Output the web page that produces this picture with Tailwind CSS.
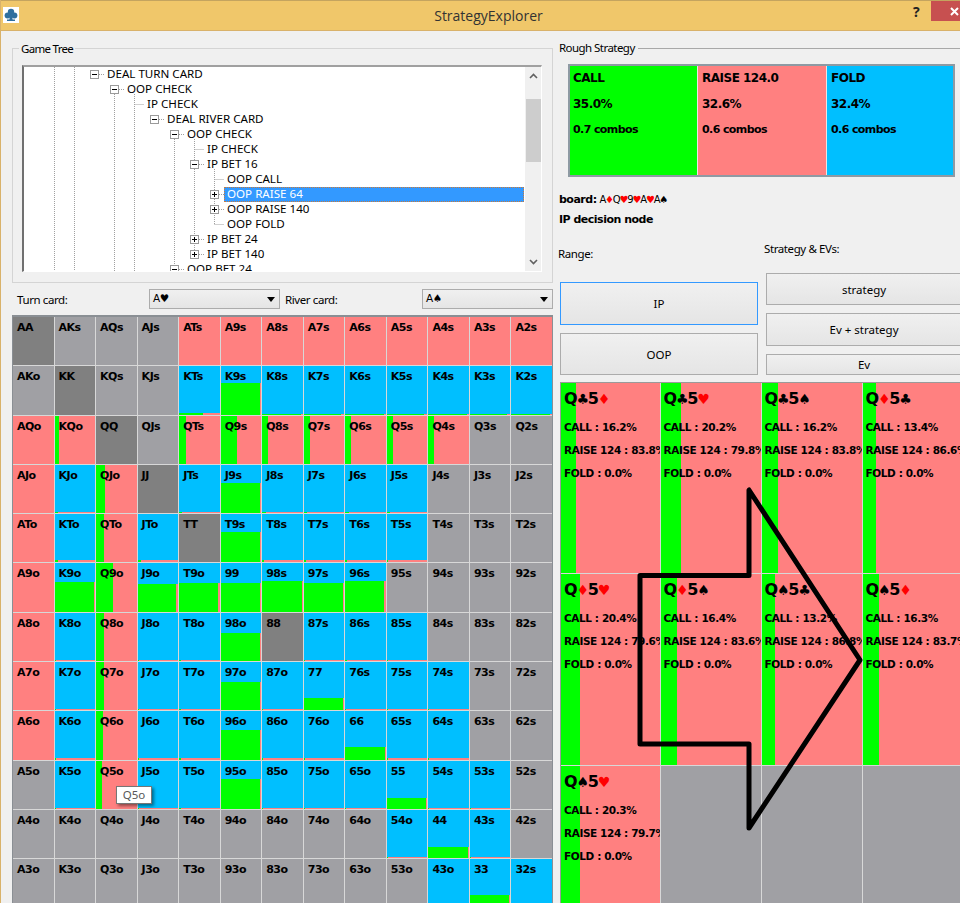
<!DOCTYPE html>
<html>
<head>
<meta charset="utf-8">
<script src="https://cdn.jsdelivr.net/npm/@tailwindcss/browser@4"></script>
</head>
<body class="bg-[#f0f0f0]">
<div class="relative w-[960px] h-[903px] overflow-hidden bg-[#f0f0f0] text-black text-[12px] font-['Noto_Sans',sans-serif] border-l border-l-[#d9b26a]">
  <!-- Title bar -->
  <div class="relative h-[31px] -ml-px flex items-start bg-[#f0c76a] border-t border-t-[#c4a45f] border-b border-b-[#d9b26a]">
    <div class="ml-[3px] mt-[6px] w-[16px] h-[16px] bg-white flex items-center justify-center">
      <svg width="14" height="14" viewBox="0 0 14 14"><g fill="#2f6f9f"><circle cx="7" cy="4" r="3.2"/><circle cx="3.6" cy="7.6" r="3"/><circle cx="10.4" cy="7.6" r="3"/><path d="M6 7h2l.6 4.6H11V13H3v-1.4h2.4z"/></g></svg>
    </div>
    <div class="absolute left-[433px] top-[6px] w-[111px] text-center text-[14px] leading-[18px] text-[#333] font-['Open_Sans',sans-serif]">StrategyExplorer</div>
    <div class="absolute left-[913px] top-[2px] text-[14px] leading-[18px] font-bold text-[#222]">?</div>
    <div class="absolute left-[931px] top-0 w-[30px] h-[20px] bg-[#c75050] flex items-center justify-center pl-[16px]">
      <svg width="9" height="9" viewBox="0 0 9 9"><path d="M1 1l7 7M8 1l-7 7" stroke="#fff" stroke-width="2"/></svg>
    </div>
  </div>

  <div class="flex items-start">
    <!-- Left column -->
    <div class="w-[554px] shrink-0 flex flex-col">
      <fieldset class="relative mt-[17px] ml-[11px] w-[541px] h-[235px] border border-[#d4d4d4] pl-[9px] pt-[16px]">
        <div class="absolute left-[6px] -top-[8px] px-[2px] bg-[#f0f0f0] leading-[15px] text-[11.5px] tracking-[-0.7px]">Game Tree</div>
        <div class="relative w-[520px] h-[207px] flex bg-white border-t-2 border-l-2 border-t-[#a0a0a0] border-l-[#707070] border-r border-b border-r-white border-b-white overflow-hidden">
          <div id="tree" class="relative w-[501px] h-[205px] shrink-0 overflow-hidden">
            <svg class="absolute left-0 top-0" width="501" height="205" viewBox="24 67 501 205" fill="none">
              <g stroke="#a0a0a0" stroke-dasharray="1 1">
                <path d="M54.5 67V272M74.5 67V272M114.5 94V272M134.5 94V272M174.5 139V272M194.5 139V250M214.5 169V224.5"/>
                <path d="M99 74.5h5M119 89.5h5M134.5 104.5h10M159 119.5h5M179 134.5h5M194.5 149.5h10M199 164.5h5M214.5 179.5h10M219 194.5h5M219 209.5h5M214.5 224.5h10M199 239.5h5M199 254.5h5M179 269.5h5"/>
              </g>
              <g stroke="#9a9a9a" fill="#fff">
                <rect x="90.5" y="70.5" width="8" height="8"/><rect x="110.5" y="85.5" width="8" height="8"/><rect x="150.5" y="115.5" width="8" height="8"/><rect x="170.5" y="130.5" width="8" height="8"/><rect x="190.5" y="160.5" width="8" height="8"/><rect x="210.5" y="190.5" width="8" height="8"/><rect x="210.5" y="205.5" width="8" height="8"/><rect x="190.5" y="235.5" width="8" height="8"/><rect x="190.5" y="250.5" width="8" height="8"/><rect x="170.5" y="265.5" width="8" height="8"/>
              </g>
              <path stroke="#000" d="M92 74.5h5M112 89.5h5M152 119.5h5M172 134.5h5M192 164.5h5M212 194.5h5M214.5 192v5M212 209.5h5M214.5 207v5M192 239.5h5M194.5 237v5M192 254.5h5M194.5 252v5M172 269.5h5"/>
            </svg>
            <div class="relative flex flex-col text-[11.6px] leading-[14px] whitespace-nowrap">
              <div class="h-[15px] pl-[83px]">DEAL TURN CARD</div>
              <div class="h-[15px] pl-[103px]">OOP CHECK</div>
              <div class="h-[15px] pl-[123px]">IP CHECK</div>
              <div class="h-[15px] pl-[143px]">DEAL RIVER CARD</div>
              <div class="h-[15px] pl-[163px]">OOP CHECK</div>
              <div class="h-[15px] pl-[183px]">IP CHECK</div>
              <div class="h-[15px] pl-[183px]">IP BET 16</div>
              <div class="h-[15px] pl-[203px]">OOP CALL</div>
              <div class="h-[15px] ml-[200px] mr-[1px] pl-[3px] bg-[#3399ff] text-white outline-1 -outline-offset-1 outline-dotted outline-[#c97a3a]">OOP RAISE 64</div>
              <div class="h-[15px] pl-[203px]">OOP RAISE 140</div>
              <div class="h-[15px] pl-[203px]">OOP FOLD</div>
              <div class="h-[15px] pl-[183px]">IP BET 24</div>
              <div class="h-[15px] pl-[183px]">IP BET 140</div>
              <div class="h-[15px] pl-[163px]">OOP BET 24</div>
            </div>
          </div>
          <div class="relative w-[16px] bg-[#f0f0f0] flex flex-col items-center">
            <svg class="mt-[6px]" width="9" height="6" viewBox="0 0 9 6"><path d="M1 5l3.5-3.5L8 5" fill="none" stroke="#606060" stroke-width="1.6"/></svg>
            <div class="mt-[20px] w-[15px] h-[63px] bg-[#cdcdcd]"></div>
            <svg class="mt-auto mb-[6px]" width="9" height="6" viewBox="0 0 9 6"><path d="M1 1l3.5 3.5L8 1" fill="none" stroke="#606060" stroke-width="1.6"/></svg>
          </div>
        </div>
      </fieldset>

      <div class="mt-[6px] h-[20px] flex items-center text-[11.5px] tracking-[-0.4px]">
        <div class="ml-[16px] w-[132px] pt-[2px]">Turn card:</div>
        <div class="w-[131px] h-[20px] border border-[#acacac] bg-gradient-to-b from-[#f0f0f0] to-[#e5e5e5] flex items-center pl-[3px] pr-[4px] justify-between">
          <span class="font-['DejaVu_Sans',sans-serif] text-[10.5px]">A<span>♥</span></span>
          <svg width="8" height="5" viewBox="0 0 8 5"><path d="M0 0h8L4 5z" fill="#000"/></svg>
        </div>
        <div class="ml-[5px] w-[137px] pt-[2px]">River card:</div>
        <div class="w-[131px] h-[20px] border border-[#acacac] bg-gradient-to-b from-[#f0f0f0] to-[#e5e5e5] flex items-center pl-[3px] pr-[4px] justify-between">
          <span class="font-['DejaVu_Sans',sans-serif] text-[10.5px]">A<span>♠</span></span>
          <svg width="8" height="5" viewBox="0 0 8 5"><path d="M0 0h8L4 5z" fill="#000"/></svg>
        </div>
      </div>

      <div id="range" class="mt-[6px] ml-[11px] w-[541px] h-[620px] overflow-hidden border-t-2 border-x border-[#8a8f94] bg-[#d8d8d8] grid grid-cols-[repeat(13,1fr)] auto-rows-[48.3px] gap-px content-start"></div>
    </div>

    <!-- Right column -->
    <div class="flex-1 min-w-0 flex flex-col">
      <div class="mt-[10px] ml-[4px] h-[14px] flex items-center gap-[3px] text-[11.5px] tracking-[-0.55px]">
        <span>Rough Strategy</span><div class="flex-1 h-px bg-[#a8a8a8]"></div>
      </div>
      <div class="mt-[9px] ml-[13px] w-[387px] h-[113px] border-2 border-[#8e9aa3] bg-[#e8e8e8] flex gap-px font-['DejaVu_Sans',sans-serif] font-bold text-[12px] tracking-[-0.5px]">
        <div class="w-[127px] bg-[#00ff00] pl-[3px] flex flex-col"><div class="mt-[5px] h-[14px] leading-[14px]">CALL</div><div class="mt-[12px] h-[14px] leading-[14px]">35.0%</div><div class="mt-[12px] h-[14px] leading-[14px] text-[11px] tracking-[-0.6px]">0.7 combos</div></div>
        <div class="w-[128px] bg-[#ff8080] pl-[4px] flex flex-col"><div class="mt-[5px] h-[14px] leading-[14px]">RAISE 124.0</div><div class="mt-[12px] h-[14px] leading-[14px]">32.6%</div><div class="mt-[12px] h-[14px] leading-[14px] text-[11px] tracking-[-0.6px]">0.6 combos</div></div>
        <div class="flex-1 bg-[#00bfff] pl-[4px] flex flex-col"><div class="mt-[5px] h-[14px] leading-[14px]">FOLD</div><div class="mt-[12px] h-[14px] leading-[14px]">32.4%</div><div class="mt-[12px] h-[14px] leading-[14px] text-[11px] tracking-[-0.6px]">0.6 combos</div></div>
      </div>
      <div class="mt-[15px] ml-[4px] h-[14px] leading-[14px] text-[11px] whitespace-nowrap"><span class="font-bold font-['DejaVu_Sans',sans-serif] text-[11px] tracking-[-0.5px]">board:</span> <span class="font-['DejaVu_Sans',sans-serif] text-[10px] tracking-[-1.2px]">A<span class="text-[#ff0000]">♦</span>Q<span class="text-[#ff0000]">♥</span>9<span class="text-[#ff0000]">♥</span>A<span class="text-[#ff0000]">♥</span>A<span>♠</span></span></div>
      <div class="mt-[7px] ml-[4px] h-[14px] leading-[14px] font-bold font-['DejaVu_Sans',sans-serif] text-[11px] tracking-[-0.5px]">IP decision node</div>

      <div class="mt-[15px] flex text-[11.5px]">
        <div class="ml-[5px] w-[198px] shrink-0 flex flex-col">
          <div class="mt-[5px] -ml-[2px] h-[14px] leading-[14px] tracking-[-0.4px]">Range:</div>
          <button class="mt-[21px] h-[43px] border border-[#3399ff] bg-gradient-to-b from-[#f0f0f0] to-[#e5e5e5]">IP</button>
          <button class="mt-[8px] h-[42px] pt-[1px] border border-[#acacac] bg-gradient-to-b from-[#f0f0f0] to-[#e5e5e5]">OOP</button>
        </div>
        <div class="ml-[8px] w-[196px] shrink-0 flex flex-col">
          <div class="-ml-[2px] h-[14px] leading-[14px] tracking-[-0.4px] whitespace-nowrap">Strategy &amp; EVs:</div>
          <button class="mt-[17px] h-[32px] pt-[1px] border border-[#acacac] bg-gradient-to-b from-[#f0f0f0] to-[#e5e5e5]">strategy</button>
          <button class="mt-[8px] h-[33px] border border-[#acacac] bg-gradient-to-b from-[#f0f0f0] to-[#e5e5e5]">Ev + strategy</button>
          <button class="mt-[8px] h-[21px] border border-[#acacac] bg-gradient-to-b from-[#f0f0f0] to-[#e5e5e5]">Ev</button>
        </div>
      </div>

      <div id="combos" class="mt-[7px] ml-[5px] w-[405px] h-[530px] overflow-hidden border-l border-t border-[#9a9a9a] bg-[#d8d8d8] grid grid-cols-[98.5px_100px_100px_100px_100px] grid-rows-[189.5px_191px_200px] gap-px content-start"></div>
    </div>
  </div>

  <!-- Tooltip -->
  <div class="absolute left-[115px] top-[786px] w-[36px] h-[18px] bg-white border border-[#767676] text-[#575757] text-[11.5px] leading-[16px] text-center shadow-[2px_2px_3px_rgba(0,0,0,0.45)]">Q5o</div>

  <!-- Hand-drawn arrow -->
  <svg class="absolute left-0 top-0 pointer-events-none" width="960" height="903" viewBox="0 0 960 903" fill="none">
    <path d="M748 490V575.5H639V744H748V828L859 660Z" stroke="#000" stroke-width="5" stroke-linejoin="round"/>
  </svg>
</div>

<script>
const R = ['A','K','Q','J','T','9','8','7','6','5','4','3','2'];
// g grey, d pair grey, p pink, b blue, t"n" left green n%, h"n,m" blue n px then green m%, s"n,m" blue with an n px strip
const M = [
 'd g g g p p p p p p p p p',
 'g d g g b2,60 h17,98 s1,95 s1,92 s1,95 s1,92 s1,96 s1,92 s1,96',
 'p t10 d g t18 t40 t15 t15 t15 t15 t15 g g',
 'p s1,8 t22 d s1,8 h18,98 s1,10 s1,8 s1,8 s1,8 g g g',
 'p s2,8 t19 s2,8 d h18,98 s2,5 s2,5 s2,5 s2,3 g g g',
 'p h19,98 t42 h21,94 h20,97 h20,97 h18,98 h20,97 h18,96 g g g g',
 'p s1,4 t19 s1,4 s1,4 h20,97 d s1,3 s1,3 s1,2 g g g',
 'p s1,3 t19 s1,3 s1,4 h20,97 s1,3 h36,97 s1,2 s1,2 s1,2 g g',
 'p s2,3 t17 s2,3 s2,4 h19,97 s2,3 s2,3 h36,97 s2,2 s2,2 g g',
 'g s1,3 t15 s1,3 s1,4 h18,98 s1,2 s1,2 s1,2 h37,97 s1,2 s1,2 g',
 'g g g g g g g g g s1,2 h37,97 s1,2 g',
 'g g g g g g g g g g b h36,97 b'
];
const range = document.getElementById('range');
M.forEach((row, r) => row.split(' ').forEach((spec, c) => {
  const label = r === c ? R[r] + R[c] : r < c ? R[r] + R[c] + 's' : R[c] + R[r] + 'o';
  const cell = document.createElement('div');
  const kind = spec[0];
  const nums = spec.slice(1).split(',').map(Number);
  let base = 'relative overflow-hidden flex flex-col';
  if (kind === 'g') base += ' bg-[#a0a0a4]';
  if (kind === 'd') base += ' bg-[#808080]';
  if (kind === 'p') base += ' bg-[#ff8080]';
  if (kind === 'b') base += ' bg-[#00bfff]';
  cell.className = base;
  let blue = null, green = null;
  if (kind === 't') { blue = 0; green = nums[0]; }
  if (kind === 'h') { blue = nums[0]; green = nums[1]; }
  if (kind === 's') { blue = 48.3 - nums[0]; green = nums[1]; }
  if (kind === 'b' && nums[0]) { blue = 48.3 - nums[0]; green = nums[1]; }
  if (blue !== null) {
    const top = document.createElement('div');
    top.className = 'bg-[#00bfff] shrink-0';
    top.style.height = blue + 'px';
    const low = document.createElement('div');
    low.className = 'flex-1 flex bg-[#ff8080]';
    const g = document.createElement('div');
    g.className = 'bg-[#00ff00]';
    g.style.width = green + '%';
    low.appendChild(g);
    cell.append(top, low);
  }
  const t = document.createElement('div');
  t.className = "absolute left-[4px] top-[4px] leading-[14px] font-bold font-['DejaVu_Sans',sans-serif] text-[11px] tracking-[-0.5px]";
  t.textContent = label;
  cell.appendChild(t);
  range.appendChild(cell);
}));

const red = s => s === '♦' || s === '♥';
const C = [
 ['♣','♦',16.2,83.8,15],['♣','♥',20.2,79.8,20],['♣','♠',16.2,83.8,16],['♦','♣',13.4,86.6,13],null,
 ['♦','♥',20.4,79.6,19],['♦','♠',16.4,83.6,16],['♠','♣',13.2,86.8,13],['♠','♦',16.3,83.7,16],null,
 ['♠','♥',20.3,79.7,19],null,null,null,null
];
const combos = document.getElementById('combos');
C.forEach(d => {
  const cell = document.createElement('div');
  if (!d) { cell.className = 'bg-[#a0a0a4]'; combos.appendChild(cell); return; }
  cell.className = 'relative overflow-hidden bg-[#ff8080]';
  const g = document.createElement('div');
  g.className = 'absolute left-0 top-0 bottom-0 bg-[#00ff00]';
  g.style.width = d[4] + 'px';
  cell.appendChild(g);
  const body = document.createElement('div');
  body.className = "relative pl-[3px] flex flex-col font-['DejaVu_Sans',sans-serif] font-bold whitespace-nowrap";
  const h = document.createElement('div');
  h.className = 'mt-[6px] h-[20px] leading-[20px] text-[16px] tracking-[-1.2px]';
  const sp = s => { const e = document.createElement('span'); e.className = red(s) ? 'text-[#ff0000] text-[14px]' : 'text-[14px]'; e.textContent = s; return e; };
  h.append('Q', sp(d[0]), '5', sp(d[1]));
  body.appendChild(h);
  [['CALL : ' + d[2].toFixed(1) + '%','mt-[11px]'],['RAISE 124 : ' + d[3].toFixed(1) + '%','mt-[9px]'],['FOLD : 0.0%','mt-[9px]']].forEach(([txt, m]) => {
    const l = document.createElement('div');
    l.className = 'h-[14px] leading-[14px] text-[10.5px] tracking-[-0.4px] ' + m;
    l.textContent = txt;
    body.appendChild(l);
  });
  cell.appendChild(body);
  combos.appendChild(cell);
});
</script>
</body>
</html>
